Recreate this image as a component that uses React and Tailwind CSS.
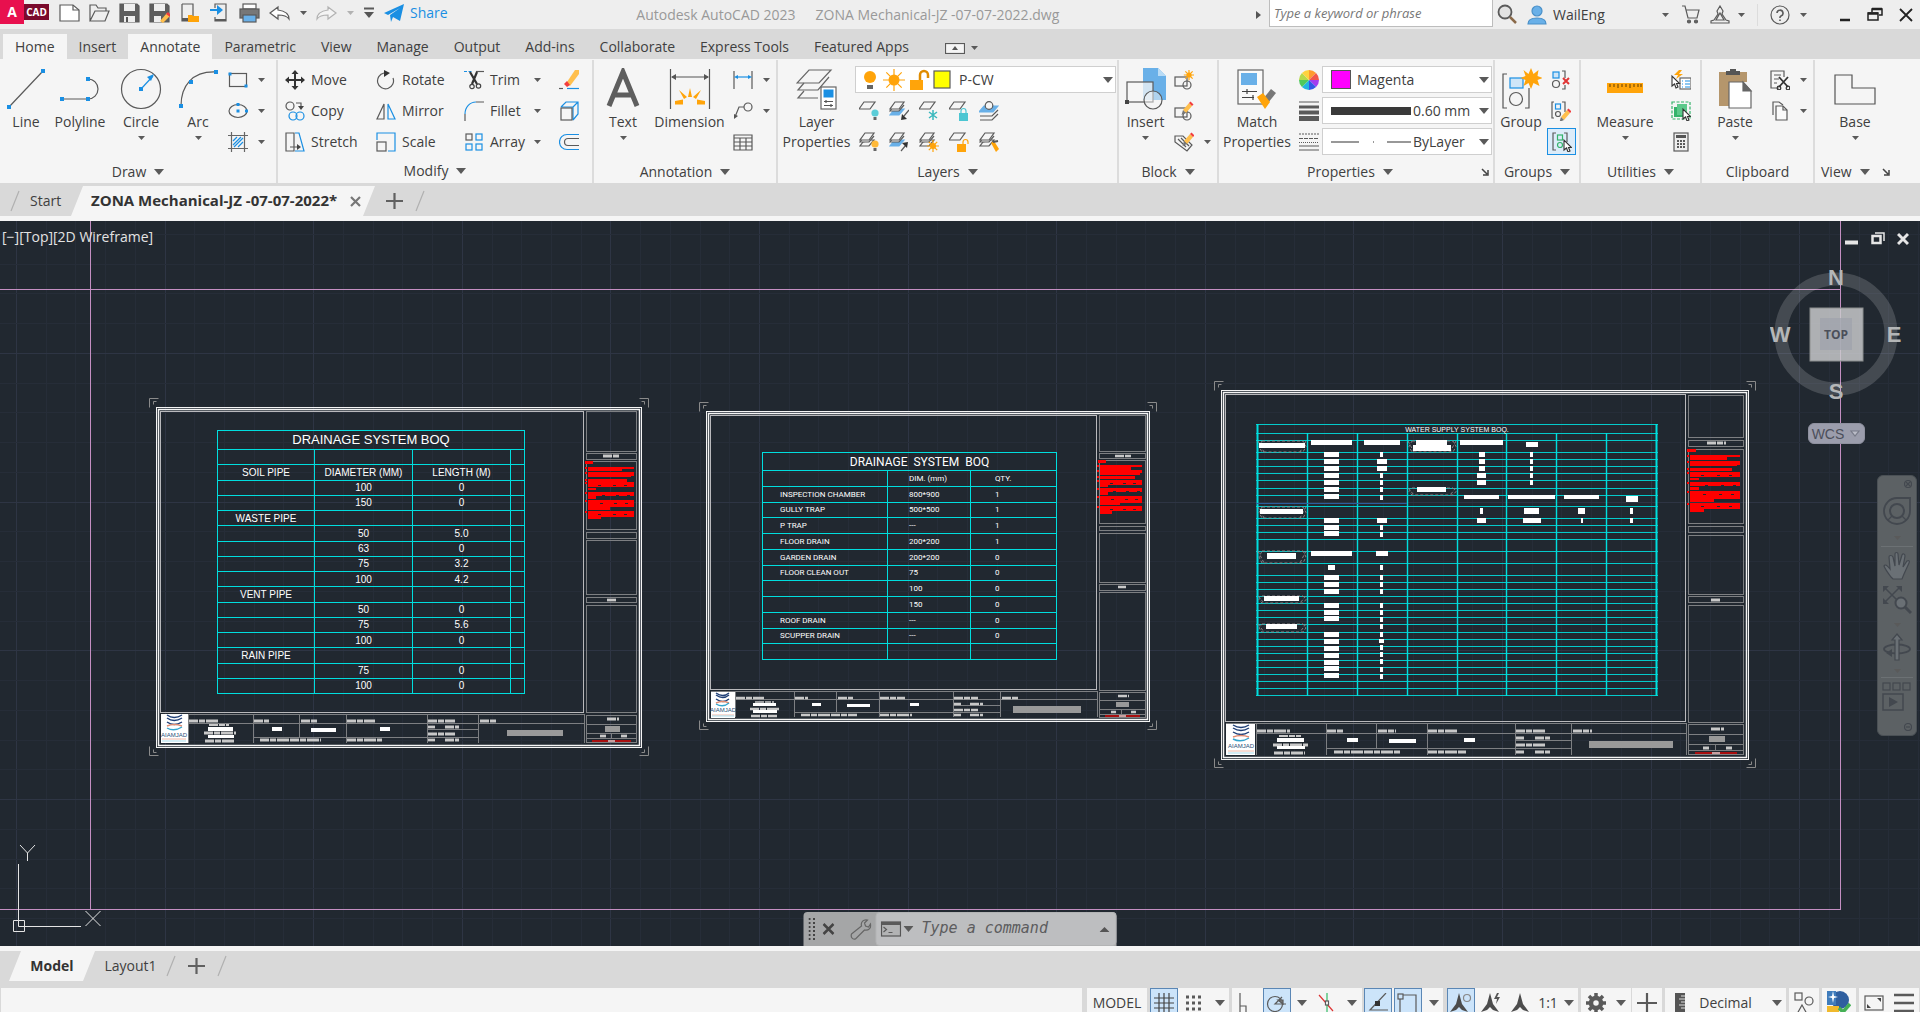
import React from "react";

const INK = "#5a5a5a";
const BLUE = "#1a8fe3";
const LIGHT = "#69b0e8";
const ORANGE = "#ffa40a";

function Ico({ w = 20, h = 20, children, className = "" }) {
  return (
    <svg width={w} height={h} viewBox={`0 0 ${w} ${h}`} fill="none" stroke={INK} strokeWidth="1.2" className={`shrink-0 ${className}`} aria-hidden="true">
      {children}
    </svg>
  );
}

function Caret({ big = false, className = "" }) {
  return big ? (
    <svg width="10" height="6" viewBox="0 0 10 6" className={`shrink-0 ${className}`} aria-hidden="true"><path d="M0 0h10L5 6z" fill="#5a5a5a" /></svg>
  ) : (
    <svg width="7" height="4" viewBox="0 0 7 4" className={`shrink-0 ${className}`} aria-hidden="true"><path d="M0 0h7L3.5 4z" fill="#5a5a5a" /></svg>
  );
}

const dots = (pts, s = 4) => pts.map(([x, y], i) => <rect key={i} x={x - s / 2} y={y - s / 2} width={s} height={s} fill={BLUE} stroke="none" />);

/* ---------- icons: layers ---------- */
const sheetPath = (x, y, w = 14, h = 7) => `M${x + 5} ${y}h${w - 5}l-5 ${h}h-${w - 5}z`;
const Stack = ({ top = 0, fill }) => (
  <g>
    <path d={`M4 ${top + 10}l-3 4h9l5-6h-3z`} fill={fill || "none"} stroke={fill || INK} />
    <path d={`M4 ${top + 6}l-3 4h9l5-6`} fill="#f5f5f5" />
    <path d={sheetPath(1, top + 1)} fill="#f5f5f5" />
  </g>
);
const Bulb = ({ x, y, c }) => (
  <g stroke="none"><circle cx={x} cy={y} r="3.6" fill={c} /><rect x={x - 1.5} y={y + 4} width="3" height="3" fill="#666" /></g>
);
const Sun = ({ x, y, r = 3.4 }) => (
  <g stroke={ORANGE} strokeWidth="1.6">
    <circle cx={x} cy={y} r={r} fill={ORANGE} stroke="none" />
    <path d={`M${x} ${y - r * 2}v${r * 4}M${x - r * 2} ${y}h${r * 4}M${x - r * 1.4} ${y - r * 1.4}l${r * 2.8} ${r * 2.8}M${x + r * 1.4} ${y - r * 1.4}l-${r * 2.8} ${r * 2.8}`} strokeWidth="1.2" />
  </g>
);
const Pencil = ({ x, y }) => (
  <g stroke="none"><path d={`M${x + 3} ${y + 6}l6-7 3 3-6 7z`} fill="#ffbf4d" /><path d={`M${x + 9} ${y - 1}l1.5-1.5 3 3-1.5 1.5z`} fill="#f23d3d" /><path d={`M${x + 3} ${y + 6}l3 3-4.500 2z`} fill="#777" /></g>
);
const Cursor = ({ x, y }) => <path d={`M${x} ${y}v10l2.500-2 1.500 4 2-1-1.500-3.500h3z`} fill="#fff" stroke="#333" strokeWidth="1.1" />;

const I = {
  line: <Ico w={41} h={42}><path d="M3 39L37 3" />{dots([[3, 39], [37, 3]])}</Ico>,
  polyline: <Ico w={41} h={42}><path d="M2 31h26a10 10 0 0 0 0-20" />{dots([[2, 31], [28, 31], [28, 11]])}</Ico>,
  circle: <Ico w={42} h={42}><circle cx="21" cy="21" r="19.500" /><path d="M21 21L33 8" stroke={BLUE} /><path d="M34 6l-7 3 4 4z" fill={BLUE} stroke="none" />{dots([[21, 21]])}</Ico>,
  arc: <Ico w={41} h={42}><path d="M3 38C3 18 14 3 38 4" />{dots([[3, 38], [13, 14], [38, 4]])}</Ico>,
  rect: <Ico><rect x="1.500" y="3.500" width="17" height="13" />{dots([[2, 4], [18, 16]], 3)}</Ico>,
  ellipse: <Ico><ellipse cx="10" cy="10" rx="9" ry="6.500" />{dots([[10, 10], [10, 3.5], [18.5, 10]], 3)}</Ico>,
  hatch: <Ico><path d="M3.500 0v20M16.500 0v20M0 3.500h20M0 16.500h20" stroke="#666" /><path d="M5 9l4-4M5 13l8-8M6 15l9-9M10 15l5-5" stroke={BLUE} /></Ico>,
  move: <Ico><path d="M10 3v14M3 10h14" stroke="#333" strokeWidth="2" /><path d="M10 0l3.500 4h-7zM10 20l3.500-4h-7zM0 10l4-3.500v7zM20 10l-4-3.500v7z" fill="#333" stroke="none" /></Ico>,
  copy: <Ico><circle cx="5" cy="5" r="4" /><path d="M11 2h5v4" /><path d="M13 5h6l-3 4z" fill="#444" stroke="none" /><circle cx="8" cy="15" r="4" stroke={BLUE} /><circle cx="15" cy="15" r="4" stroke={BLUE} /></Ico>,
  stretch: <Ico><path d="M1 1h8v18H1zM5 15h8" /><path d="M16 15l-4-3v6z" fill="#444" stroke="none" /><path d="M10 1h4l5 18h-9" stroke={BLUE} /></Ico>,
  rotate: <Ico><path d="M8 3a8 8 0 1 0 9 5" /><path d="M8 0l6 3-6 4z" fill="#333" stroke="none" /></Ico>,
  mirror: <Ico><path d="M8 3v15H1z" /><path d="M12 3v15h7z" stroke={BLUE} /></Ico>,
  scale: <Ico><path d="M1 8V1h18v18h-7" stroke={BLUE} /><rect x="1" y="10" width="9" height="9" /></Ico>,
  trim: <Ico><path d="M0 1.500h8" stroke={BLUE} strokeDasharray="3 1.500" /><path d="M12 1.500h8" /><path d="M6 2l7 12M13 2l-5 12" stroke="#333" strokeWidth="2.200" /><circle cx="8" cy="16.500" r="2.200" stroke="#444" /><circle cx="14.500" cy="16" r="2.200" stroke="#444" /></Ico>,
  fillet: <Ico><path d="M1 20v-7M12 1h8" /><path d="M1 13C1 6 6 1 12 1" stroke={BLUE} /></Ico>,
  array: <Ico><rect x="2" y="2" width="6" height="6" /><g stroke={BLUE}><rect x="12" y="2" width="6" height="6" /><rect x="2" y="12" width="6" height="6" /><rect x="12" y="12" width="6" height="6" /></g></Ico>,
  erase: <Ico><path d="M8 12L16 0h4v4l-9 12z" fill="#ffbf4d" stroke="none" /><path d="M5 14l3-3 3 4-3 2z" fill="#f23d3d" stroke="none" /><path d="M0 18.500h4" /><path d="M8 18.500h12" stroke={BLUE} /></Ico>,
  explode: <Ico><path d="M2 6l5-5h12v12l-5 6M14 6l5-5M2 6h12v13" stroke={BLUE} /><rect x="2" y="7" width="11" height="12" /></Ico>,
  offset: <Ico><path d="M20 2.500H8a7.500 7.500 0 0 0 0 15h12" stroke={BLUE} /><path d="M20 6.500H9a3.500 3.500 0 0 0 0 7h11" /></Ico>,
  text: <Ico w={36} h={42}><path d="M4 38L18 4l14 34M9 27h18" stroke="#5e5e5e" strokeWidth="5" /></Ico>,
  dimension: <Ico w={42} h={42}><path d="M1.500 1v40M40.500 1v40M3 9h36" stroke="#555" /><path d="M2 9l5-3v6zM40 9l-5-3v6z" fill="#555" stroke="none" /><path d="M6 33l8-1.500v5H6zM36 33l-8-1.500v5h8zM10 22l8 7-3 2zM32 22l-8 7 3 2zM21 20l2 9h-4z" fill={ORANGE} stroke="none" /></Ico>,
  linear: <Ico><path d="M1 1v18M19 1v18" /><path d="M3 7h14" stroke={BLUE} /><path d="M1 7l4-2v4zM19 7l-4-2v4z" fill={BLUE} stroke="none" /></Ico>,
  leader: <Ico><circle cx="15" cy="6" r="4" /><path d="M11 6H6L2 16" /><path d="M1 18l0-5 4 2z" fill="#555" stroke="none" /></Ico>,
  table: <Ico><path d="M1 3h18v15H1zM1 6h18M1 10h18M1 14h18M7 6v12M13 6v12" /></Ico>,
  layers: <Ico w={42} h={42}><g stroke="#666"><path d="M13 2h22L23 15H1z" /><path d="M8 15l-6 7h20l11-13" /><path d="M8 23l-6 7h20" /></g><rect x="25" y="19" width="15" height="22" fill="#fff" stroke="#666" /><rect x="27.500" y="21.500" width="10" height="8" fill={BLUE} stroke="none" /><path d="M28 33.500h9M28 37.500h9M30 32v3M35 36v3" stroke="#555" /></Ico>,
  l1: <Ico><path d={sheetPath(0, 1, 16, 7)} /><Bulb x={16} y={12} c="#5ccdd8" /></Ico>,
  l2: <Ico><Stack fill={LIGHT} /><path d="M20 9l-5 6" /><path d="M12 19l1-6 5 5z" fill="#333" stroke="none" /></Ico>,
  l3: <Ico><path d={sheetPath(0, 1, 16, 7)} /><path d="M14 9v10M10 11l8 6M18 11l-8 6" stroke="#39b8bd" strokeWidth="1.500" /></Ico>,
  l4: <Ico><path d={sheetPath(0, 1, 16, 7)} /><rect x="10" y="12" width="9" height="8" fill="#4cc6d2" stroke="none" /><path d="M12 12v-2a2.500 2.500 0 0 1 5 0v2" stroke="#4cc6d2" /></Ico>,
  l5: <Ico><path d={sheetPath(0, 5, 19, 6)} fill={LIGHT} stroke={LIGHT} /><circle cx="10" cy="4.500" r="3.800" fill="#f5f5f5" /><path d="M1 15h12l6-6M1 19h12l6-6" /></Ico>,
  m1: <Ico><Stack /><Bulb x={16} y={12} c="#ffb938" /></Ico>,
  m2: <Ico><Stack fill={LIGHT} /><path d="M12 19l5-6" /><path d="M19 10l-1 6-5-5z" fill="#333" stroke="none" /></Ico>,
  m3: <Ico><Stack /><Sun x={14} y={14} r={3} /></Ico>,
  m4: <Ico><path d={sheetPath(0, 1, 16, 7)} /><rect x="8" y="12" width="9" height="8" fill={ORANGE} stroke="none" /><path d="M14 12v-2a2.500 2.500 0 0 1 5 0v2" stroke={ORANGE} /></Ico>,
  m5: <Ico><Stack /><path d="M12 11l3-2 5 8-3 3z" fill={ORANGE} stroke="none" /><path d="M14 10l5-1" strokeWidth="2" /></Ico>,
  insert: <Ico w={42} h={42}><path d="M18 0h15l8 8v24H18z" fill={LIGHT} stroke="none" /><path d="M33 0v8h8z" fill="#b9dcf6" stroke="none" /><rect x="2" y="14" width="26" height="20" fill="#f5f5f5" fillOpacity="0.75" /><circle cx="28" cy="32" r="9" fill="#f5f5f5" fillOpacity="0.5" /><rect x="0" y="32" width="4" height="4" fill="#444" stroke="none" /></Ico>,
  b1: <Ico><rect x="1" y="7" width="12" height="9" /><circle cx="13" cy="15" r="4" /><Sun x={15} y={5} r={2.6} /></Ico>,
  b2: <Ico><rect x="1" y="7" width="12" height="9" /><circle cx="13" cy="15" r="4" /><Pencil x={6} y={3} /></Ico>,
  b3: <Ico><path d="M1 4h8l9 9-5 6L1 10z" /><path d="M4 7l8 8M7 6l8 8" /><Pencil x={7} y={3} /></Ico>,
  match: <Ico w={42} h={42}><rect x="2" y="2" width="25" height="34" fill="#fafafa" stroke="#666" /><rect x="5" y="5" width="16" height="12" fill={LIGHT} stroke="none" /><path d="M6 23.500h15M6 29.500h12M11 21v5M17 27v5" stroke="#444" /><path d="M27 31l8-10 5 4-8 10z" fill="#777" stroke="none" /><path d="M21 29l6-4 7 9-5 7z" fill={ORANGE} stroke="none" /></Ico>,
  wheel: (
    <Ico>{["#ff9a2e", "#f2554b", "#a23cf0", "#3257e6", "#21b5e0", "#4fc95b", "#b7d94a", "#ffd23e"].map((c, i) => {
      const a = (i * Math.PI) / 4 - Math.PI / 2, b = a + Math.PI / 4;
      return <path key={c} d={`M10 10L${10 + 10 * Math.cos(a)} ${10 + 10 * Math.sin(a)}A10 10 0 0 1 ${10 + 10 * Math.cos(b)} ${10 + 10 * Math.sin(b)}z`} fill={c} stroke="none" />;
    })}</Ico>
  ),
  weights: <Ico><path d="M0 1h20" strokeWidth="1" /><path d="M0 6h20" strokeWidth="3" /><path d="M0 11.500h20" strokeWidth="4" /><path d="M0 17.500h20" strokeWidth="5" /></Ico>,
  types: <Ico><path d="M0 2h20" strokeDasharray="2 1" /><path d="M0 6.500h20" strokeDasharray="4 1" /><path d="M0 10.500h20" strokeDasharray="1 1" /><path d="M0 14h20M0 18h20" /></Ico>,
  group: <Ico w={42} h={42}><path d="M7 6H3v34h4M25 40h4V20" stroke="#555" /><rect x="10" y="10" width="13" height="10" fill="#cfe6f8" stroke={BLUE} /><circle cx="16" cy="31" r="6.500" /><path d="M31 0l2.500 6 5-4-1 6 5 2-5 2 2 6-6-3-2.500 6-2.500-6-5 3 2-6-5-2 5-2-2-6 5 4z" fill={ORANGE} stroke="none" /></Ico>,
  g1: <Ico><rect x="2" y="2" width="6" height="6" fill="#cfe6f8" stroke={BLUE} /><circle cx="5" cy="14" r="3.500" /><path d="M11 1h3v7M11 19h3v-4" /><path d="M12 8l6 6M18 8l-6 6" stroke="#e03535" strokeWidth="2" /></Ico>,
  g2: <Ico><path d="M3 1H1v16h2M11 1h3v10" /><rect x="4.500" y="3" width="5" height="5" stroke={BLUE} /><circle cx="7" cy="13" r="2.500" /><Pencil x={7} y={10} /></Ico>,
  g3: <Ico><path d="M4 1H1v17h3M12 1h3v9" /><rect x="5.500" y="3" width="5" height="5" stroke="#35b36b" /><circle cx="8" cy="13" r="2.500" stroke="#35b36b" /><Cursor x={12} y={8} /></Ico>,
  ruler: <Ico w={36} h={42}><rect x="0" y="15" width="36" height="10" fill={ORANGE} stroke="none" /><path d="M3 16v3M7 16v3M11 16v4M15 16v3M19 16v3M23 16v4M27 16v3M31 16v3M34 16v3" stroke="#7a4f06" /></Ico>,
  u1: <Ico><rect x="9" y="8" width="11" height="11" fill="#fff" stroke="#666" /><path d="M14 11h5M14 14h5M14 17h5M11 11h1M11 14h1M11 17h1" stroke={BLUE} /><path d="M8 0L3 5h4L5 9l7-5H8l3-4z" fill={ORANGE} stroke="none" /><Cursor x={1} y={6} /></Ico>,
  u2: <Ico><rect x="1" y="1" width="18" height="17" stroke="#35b36b" strokeDasharray="3 1.500" /><rect x="3" y="6" width="9" height="10" fill="#35b36b" stroke="none" /><rect x="6" y="3" width="10" height="11" fill="#5cc98b" stroke="none" /><Cursor x={12} y={8} /></Ico>,
  u3: <Ico><rect x="3" y="1" width="14" height="18" fill="#eee" /><rect x="5" y="3" width="10" height="3" fill="#555" stroke="none" /><path d="M6 9h8M6 12h8M6 15h8" strokeWidth="2" strokeDasharray="2 1" /></Ico>,
  paste: <Ico w={36} h={42}><path d="M2 4h28v10H13v24H2z" fill="#b5966c" stroke="none" /><path d="M9 7V3h4V1h6v2h4v4z" fill="#555" stroke="none" /><path d="M12 14h14l8 9v17H12z" fill="#fff" stroke="#666" /><path d="M26 14v9h8z" fill="#666" stroke="#666" /></Ico>,
  cut: <Ico><path d="M9 18H1V1h13v6M4 5h7M4 9h5M4 13h3" /><path d="M9 7l9 10M18 7l-9 10" stroke="#333" strokeWidth="1.800" /><circle cx="9" cy="18" r="1.800" stroke="#333" /><circle cx="18" cy="18" r="1.800" stroke="#333" /></Ico>,
  clip: <Ico><path d="M3 14V1h6l4 3" /><path d="M6 5h7l4 4v10H6z" fill="#fafafa" /><path d="M13 5v4h4" /></Ico>,
  base: <Ico w={42} h={42}><path d="M1 7h17v13h23v16H1z" stroke="#555" /></Ico>,
};

function Big({ icon, label, label2, w, caret }) {
  return (
    <button type="button" className={`${w} flex h-[100px] shrink-0 flex-col items-center whitespace-nowrap pt-2`}>
      <span className="flex h-[42px] items-center">{icon}</span>
      <span className="mt-0.5 leading-5">{label}</span>
      {label2 && <span className="leading-5">{label2}</span>}
      {caret && <Caret className="mt-1" />}
    </button>
  );
}

function Small({ icon, label, caret, name, w = "", active }) {
  return (
    <button type="button" aria-label={name || label} className={`${w} flex h-[31px] items-center whitespace-nowrap`}>
      {active ? <span className="-ml-1 flex h-[27px] w-[29px] items-center justify-center border border-[#1a8fe3] bg-[#dcecf9]">{icon}</span> : icon}
      {label && <span className="ml-1.5">{label}</span>}
      {caret && <Caret className={label ? "ml-auto" : "ml-2.5"} />}
    </button>
  );
}

function Panel({ w, title, caret = true, launcher, children }) {
  return (
    <section className={`${w} flex flex-col border-r-2 border-[#dcdcdc]`}>
      <div className="flex h-[100px]">{children}</div>
      <div className="flex h-6 items-center">
        <button type="button" className="mx-auto flex items-center gap-2 whitespace-nowrap leading-5">{title}{caret && <Caret big />}</button>
        {launcher && (
          <button type="button" aria-label={`${title} settings`} className="mr-1 shrink-0">
            <Ico w={8} h={8}><path d="M1 1l5 5M7 2v5H2" stroke="#444" strokeWidth="1.500" /></Ico>
          </button>
        )}
      </div>
    </section>
  );
}

function Combo({ label, value, children, w }) {
  return (
    <div className={`${w} flex h-[27px] items-center border border-[#cfcfcf] bg-white pr-0.5`}>
      {children}
      <select aria-label={label} className="h-6 min-w-0 flex-1 appearance-none bg-transparent outline-none" defaultValue={value}>
        <option>{value}</option>
      </select>
      <Caret big />
    </div>
  );
}

function TitleBar() {
  const tb = "flex shrink-0 items-center justify-center";
  return (
    <header className="flex h-[29px] items-center bg-[#eeeeee]">
      <button type="button" aria-label="Application menu" className="flex h-6 shrink-0 items-center self-start">
        <span className="flex h-6 w-6 items-center justify-center bg-[#e8104e] text-sm font-bold text-white">A</span>
        <span className="flex h-4 w-[25px] items-center justify-center bg-[#7a0a2c] text-[10px] font-bold text-white">CAD</span>
      </button>
      <div className="ml-2.5 flex items-center gap-[9px] pb-1">
        <button type="button" aria-label="New" className={tb}><Ico w={21} h={20}><path d="M1 2h13l6 5v11H1z" fill="#fff" /><path d="M14 2v5h6" /></Ico></button>
        <button type="button" aria-label="Open" className={tb}><Ico w={21} h={20}><path d="M1 18V2h6l2 3h8v3M1 18L6 8h14l-4 10z" /></Ico></button>
        <button type="button" aria-label="Save" className={tb}><Ico w={21} h={20}><path d="M1 1h17l2 2v16H1z" fill="#5e5e5e" /><rect x="5" y="1" width="11" height="7" fill="#eee" stroke="none" /><rect x="5" y="13" width="11" height="6" fill="#eee" stroke="none" /><rect x="7" y="14" width="2" height="5" fill="#555" stroke="none" /></Ico></button>
        <button type="button" aria-label="Save As" className={tb}><Ico w={21} h={20}><path d="M1 1h17l2 2v16H1z" fill="#5e5e5e" /><rect x="5" y="1" width="11" height="7" fill="#eee" stroke="none" /><rect x="5" y="13" width="7" height="6" fill="#eee" stroke="none" /><path d="M11 18l7-8 3 3-7 7z" fill="#ffbf4d" stroke="none" /><path d="M17 11l2-2 2 2v3z" fill="#f23d3d" stroke="none" /></Ico></button>
        <button type="button" aria-label="Open from Web and Mobile" className={tb}><Ico w={21} h={20}><path d="M3 1h11v13M3 1v17h7" fill="none" /><path d="M3 16.500h7" strokeWidth="3" /><path d="M9 12h4l1 1h6v6H9z" fill={ORANGE} stroke="none" /></Ico></button>
        <button type="button" aria-label="Save to Web and Mobile" className={tb}><Ico w={21} h={20}><path d="M6 5V1h11v17H6v-4" /><path d="M6 17h11" strokeWidth="2" /><path d="M1 7h8" stroke={BLUE} strokeWidth="2" /><path d="M8 2l6 5-6 5z" fill={BLUE} stroke="none" /></Ico></button>
        <button type="button" aria-label="Plot" className={tb}><Ico w={21} h={20}><rect x="4" y="1" width="13" height="5" fill="#fff" /><rect x="1" y="6" width="19" height="9" fill="#777" /><rect x="4" y="12" width="13" height="7" fill={LIGHT} /></Ico></button>
        <button type="button" aria-label="Undo" className={`${tb} gap-2.5`}><Ico w={21} h={20}><path d="M9 4L1 10l8 6v-4c5 0 9 1 11 4 0-5-4-8-11-9z" fill="#fff" /></Ico><Caret /></button>
        <button type="button" aria-label="Redo" className={`${tb} gap-2.5 opacity-40`}><Ico w={21} h={20}><path d="M12 4l8 6-8 6v-4c-5 0-9 1-11 4 0-5 4-8 11-9z" fill="#fff" /></Ico><Caret /></button>
        <button type="button" aria-label="Customize toolbar" className={tb}><Ico w={12} h={12}><path d="M1 1.500h10" strokeWidth="2" /><path d="M1 5h10l-5 6z" fill="#555" stroke="none" /></Ico></button>
        <button type="button" className="flex shrink-0 items-center gap-1.5 text-[#1a8fe3]"><Ico w={20} h={18}><path d="M0 9L20 0l-4 17-7-4-2 5-1-7L16 4 4 11z" fill={BLUE} stroke="none" /></Ico>Share</button>
      </div>
      <div className="flex min-w-0 flex-1 justify-center gap-5 whitespace-pre pr-2 text-[#999]"><span>Autodesk AutoCAD 2023</span><span>ZONA Mechanical-JZ -07-07-2022.dwg</span></div>
      <svg width="5" height="8" viewBox="0 0 5 8" className="mr-2 shrink-0" aria-hidden="true"><path d="M0 0l5 4-5 4z" fill="#555" /></svg>
      <input aria-label="Search" placeholder="Type a keyword or phrase" className="h-[27px] w-56 shrink-0 self-start border border-t-0 border-[#bdbdbd] bg-white px-1 text-[13px] italic outline-none placeholder:text-[#777]" />
      <button type="button" aria-label="Search" className={`${tb} ml-1`}><Ico w={22} h={22}><circle cx="8" cy="8" r="6.500" strokeWidth="1.800" fill="#e2e2e2" /><path d="M13 13l6 6" stroke="#8a6a4a" strokeWidth="2.500" /></Ico></button>
      <button type="button" className="ml-2 flex w-[142px] shrink-0 items-center gap-1.5"><Ico w={20} h={20}><circle cx="10" cy="6" r="5" fill={LIGHT} stroke="#4a90c8" /><path d="M1 19c0-5 4-6 9-6s9 1 9 6z" fill={LIGHT} stroke="#4a90c8" /></Ico>WailEng<Caret className="ml-auto" /></button>
      <button type="button" aria-label="Store" className={`${tb} ml-3`}><Ico w={19} h={19}><path d="M1 1h3l3 12h9l2-8H5" /><circle cx="8" cy="16.500" r="1.500" fill="#666" /><circle cx="15" cy="16.500" r="1.500" fill="#666" /></Ico></button>
      <button type="button" aria-label="Autodesk apps" className={`${tb} ml-2.5 gap-2`}><Ico w={20} h={20}><path d="M10 1l3 5-1 3 4 6 3 1v2H1v-2l3-1 4-6-1-3zM10 8l4 7H6z" /></Ico><Caret /></button>
      <span className="ml-3 h-[22px] w-px bg-[#dcdcdc]" />
      <button type="button" aria-label="Help" className={`${tb} ml-3 gap-2.5`}><Ico w={20} h={20}><circle cx="10" cy="10" r="9" /><path d="M7 8a3 3 0 1 1 4 3l-1 1v1M10 14.500v1.500" strokeWidth="1.600" /></Ico><Caret /></button>
      <button type="button" aria-label="Minimize" className={`${tb} ml-8`}><Ico w={12} h={14}><path d="M1 12h10" stroke="#222" strokeWidth="2.500" /></Ico></button>
      <button type="button" aria-label="Restore" className={`${tb} ml-4`}><Ico w={16} h={15}><path d="M5 5V2h10v6h-3" stroke="#222" strokeWidth="1.500" /><rect x="1" y="6" width="10" height="7" stroke="#222" strokeWidth="1.500" /><path d="M1 6.500h10M5 2h10" stroke="#222" strokeWidth="2.500" /></Ico></button>
      <button type="button" aria-label="Close" className={`${tb} ml-4 mr-[7px]`}><Ico w={14} h={14}><path d="M1 1l12 12M13 1L1 13" stroke="#222" strokeWidth="1.800" /></Ico></button>
    </header>
  );
}

const TABS = ["Home", "Insert", "Annotate", "Parametric", "View", "Manage", "Output", "Add-ins", "Collaborate", "Express Tools", "Featured Apps"];

function RibbonTabs() {
  return (
    <nav className="flex h-[30px] items-end bg-[#d9d9d9] pl-[3px]">
      {TABS.map((t, i) => (
        <button key={t} type="button" className={`h-[25px] whitespace-nowrap px-3 ${i > 3 ? "ml-px" : ""} ${t === "Home" || t === "Annotate" ? "bg-[#f5f5f5]" : ""}`}>{t}</button>
      ))}
      <button type="button" aria-label="Ribbon display" className="ml-6 flex h-[22px] items-center gap-1.5">
        <Ico w={20} h={11}><rect x="0.500" y="0.500" width="19" height="10" fill="#f5f5f5" /><path d="M10 3l3 4H7z" fill="#555" stroke="none" /></Ico><Caret />
      </button>
    </nav>
  );
}

function Ribbon() {
  const col = "flex flex-col pt-1";
  return (
    <div className="flex h-[124px] shrink-0 bg-[#f5f5f5] pt-px">
      <Panel w="w-[278px] shrink-0" title="Draw">
        <Big icon={I.line} label="Line" w="w-[52px]" />
        <Big icon={I.polyline} label="Polyline" w="w-[56px]" />
        <Big icon={I.circle} label="Circle" w="w-[66px]" caret />
        <Big icon={I.arc} label="Arc" w="w-[48px]" caret />
        <div className={`${col} ml-1.5`}><Small icon={I.rect} name="Rectangle" caret /><Small icon={I.ellipse} name="Ellipse" caret /><Small icon={I.hatch} name="Hatch" caret /></div>
      </Panel>
      <Panel w="w-[316px] shrink-0" title="Modify">
        <div className={`${col} w-[91px] ml-[7px]`}><Small icon={I.move} label="Move" /><Small icon={I.copy} label="Copy" /><Small icon={I.stretch} label="Stretch" /></div>
        <div className={`${col} w-[88px]`}><Small icon={I.rotate} label="Rotate" /><Small icon={I.mirror} label="Mirror" /><Small icon={I.scale} label="Scale" /></div>
        <div className={`${col} w-[77px]`}><Small icon={I.trim} label="Trim" caret /><Small icon={I.fillet} label="Fillet" caret /><Small icon={I.array} label="Array" caret /></div>
        <div className={`${col} ml-[18px]`}><Small icon={I.erase} name="Erase" /><Small icon={I.explode} name="Explode" /><Small icon={I.offset} name="Offset" /></div>
      </Panel>
      <Panel w="w-[184px] shrink-0" title="Annotation">
        <Big icon={I.text} label="Text" w="w-[58px]" caret />
        <Big icon={I.dimension} label="Dimension" w="w-[75px]" />
        <div className={`${col} ml-1.5`}><Small icon={I.linear} name="Linear" caret /><Small icon={I.leader} name="Leader" caret /><Small icon={I.table} name="Table" /></div>
      </Panel>
      <Panel w="w-[341px] shrink-0" title="Layers">
        <Big icon={I.layers} label="Layer" label2="Properties" w="w-[77px]" />
        <div className={`${col} flex-1 pr-px`}>
          <div className="flex h-[31px] items-center">
            <Combo label="Layer" value="P-CW" w="w-full">
              <Ico w={87} h={22} className="mx-2">
                <circle cx="6" cy="8" r="6" fill={ORANGE} stroke="none" /><rect x="3" y="16" width="6" height="4" fill="#666" stroke="none" />
                <Sun x={30} y={11} r={5.500} />
                <rect x="46" y="11" width="13" height="10" fill={ORANGE} stroke="none" /><path d="M56 11V6a4 4 0 0 1 8 0v3" stroke="#e08c00" strokeWidth="2.500" />
                <rect x="70" y="2" width="16" height="17" fill="#ffff00" />
              </Ico>
            </Combo>
          </div>
          <div className="flex h-[31px] items-center gap-2.5 pl-1">{["l1", "l2", "l3", "l4", "l5"].map((k) => <button key={k} type="button" aria-label={`Layer tool ${k}`}>{I[k]}</button>)}</div>
          <div className="flex h-[31px] items-center gap-2.5 pl-1">{["m1", "m2", "m3", "m4", "m5"].map((k) => <button key={k} type="button" aria-label={`Layer tool ${k}`}>{I[k]}</button>)}</div>
        </div>
      </Panel>
      <Panel w="w-[100px] shrink-0" title="Block">
        <Big icon={I.insert} label="Insert" w="w-[53px]" caret />
        <div className={`${col} ml-0.5`}><Small icon={I.b1} name="Create" /><Small icon={I.b2} name="Edit" /><Small icon={I.b3} name="Edit Attributes" caret /></div>
      </Panel>
      <Panel w="w-[276px] shrink-0" title="Properties" launcher>
        <Big icon={I.match} label="Match" label2="Properties" w="w-[76px]" />
        <div className={`${col} w-[27px] items-center`}>{["wheel", "weights", "types"].map((k) => <span key={k} className="flex h-[31px] items-center">{I[k]}</span>)}</div>
        <div className={`${col} flex-1 pr-px`}>
          <div className="flex h-[31px] items-center"><Combo label="Object color" value="Magenta" w="w-full"><span className="mx-1.5 ml-2 h-[19px] w-5 shrink-0 border border-[#555] bg-[#ff00ff]" /></Combo></div>
          <div className="flex h-[31px] items-center"><Combo label="Lineweight" value="0.60 mm" w="w-full"><span className="ml-2 mr-0.5 h-2 w-20 shrink-0 bg-[#3a3a3a]" /></Combo></div>
          <div className="flex h-[31px] items-center"><Combo label="Linetype" value="ByLayer" w="w-full"><Ico w={80} h={4} className="ml-2 mr-0.5"><path d="M0 2h28M42 2h1M56 2h24" stroke="#333" /></Ico></Combo></div>
        </div>
      </Panel>
      <Panel w="w-[86px] shrink-0" title="Groups">
        <Big icon={I.group} label="Group" w="w-[52px]" />
        <div className={`${col} ml-1`}><Small icon={I.g1} name="Ungroup" /><Small icon={I.g2} name="Group Edit" /><Small icon={I.g3} name="Group Selection" active /></div>
      </Panel>
      <Panel w="w-[121px] shrink-0" title="Utilities">
        <Big icon={I.ruler} label="Measure" w="w-[88px]" caret />
        <div className={`${col} ml-0.5`}><Small icon={I.u1} name="Quick Select" /><Small icon={I.u2} name="Select All" /><Small icon={I.u3} name="Calculator" /></div>
      </Panel>
      <Panel w="w-[113px] shrink-0" title="Clipboard" caret={false}>
        <Big icon={I.paste} label="Paste" w="w-[66px]" caret />
        <div className={`${col} ml-0.5`}><Small icon={I.cut} name="Cut" caret /><Small icon={I.clip} name="Copy Clip" caret /></div>
      </Panel>
      <section className="flex flex-1 flex-col">
        <Big icon={I.base} label="Base" w="w-20" caret />
        <div className="flex h-6 items-center gap-2 pl-1.5"><button type="button" className="flex items-center gap-2 leading-5">View<Caret big /></button><Ico w={8} h={8} className="ml-1"><path d="M1 1l5 5M7 2v5H2" stroke="#444" strokeWidth="1.500" /></Ico></div>
      </section>
    </div>
  );
}

const Slash = () => <Ico w={10} h={22}><path d="M9 1L1 21" stroke="#b0b0b0" /></Ico>;
const Plus = () => <Ico w={17} h={16}><path d="M8.500 0v16M0 8h17" stroke="#606060" strokeWidth="2.200" /></Ico>;

function FileTabs() {
  return (
    <div className="flex h-[38px] shrink-0 items-end border-b-[5px] border-[#f5f5f5] bg-[#d9d9d9]">
      <div className="flex h-[30px] items-center pl-2.5"><Slash /><button type="button" className="w-[51px] pl-2.5 text-left">Start</button></div>
      <div className="flex h-[30px] w-[304px] items-center bg-[#f5f5f5] pl-5 pr-[14px] [clip-path:polygon(12px_0,100%_0,calc(100%-12px)_100%,0_100%)]">
        <button type="button" className="whitespace-nowrap text-[15px] font-bold text-[#333]">ZONA Mechanical-JZ -07-07-2022*</button>
        <button type="button" aria-label="Close drawing" className="ml-auto"><Ico w={11} h={11}><path d="M1 1l9 9M10 1l-9 9" strokeWidth="2.200" stroke="#777" /></Ico></button>
      </div>
      <div className="flex h-[30px] items-center gap-3 pl-[11px]"><button type="button" aria-label="New drawing"><Plus /></button><Slash /></div>
    </div>
  );
}

/* ---------- drawing sheets ---------- */
const NOTES = [
  [466, 58.7, 9, 3, 0], [469, 64.7, 50, 2, 1], [469, 66.7, 37, 3, 0], [469, 70.7, 50, 4, 1], [469, 74.2, 47, 2, 0], [469, 77.7, 42, 3, 1],
  [469, 81.7, 50, 5.4, 1], [469, 87.5, 9, 2, 0], [469, 92, 50, 4.2, 1], [469, 96.500, 9, 3, 0], [469, 100.7, 50, 8, 1], [469, 108.500, 24, 3, 0],
  [469, 112.7, 50, 6, 1], [469, 118.7, 14, 3, 0],
];

function Sheet({ x, y, w, h, bar, lead }) {
  const k = w / 528;
  const s = (n) => Math.round(n * k);
  const box = (a, b, c, d, key) => <rect key={key} x={s(a) + 0.5} y={s(b) + 0.5} width={s(c) - s(a)} height={s(d) - s(b)} />;
  const scrawl = (a, b, len, i, t = 3) => <path key={i} d={`M${s(a)} ${s(b)}h${s(len)}`} stroke="#c8c8c8" strokeWidth={t * k} strokeDasharray="9 1 6 1 12 1" />;
  const solid = (a, b, c, d, fill, i) => <rect key={i} x={s(a)} y={s(b)} width={s(c)} height={Math.max(1, s(d))} fill={fill} stroke="none" />;
  const corner = (cx, cy, dx, dy) => <path key={`${cx}-${cy}`} d={`M${cx} ${cy + dy * 9}V${cy}H${cx + dx * 9}M${cx + dx * 4} ${cy + dy * 6}v${-dy * 3}h${dx * 3}`} stroke="#8a8a8a" />;
  return (
    <svg className="absolute" style={{ left: x - 10, top: y - 10 }} width={w + 20} height={h + 20} fill="none" stroke="#7d7f82" aria-hidden="true">
      <g transform="translate(10 10)">
        {corner(-6.5, -8.5, 1, 1)}{corner(w + 6.5, -8.5, -1, 1)}{corner(-6.5, h + 7.5, 1, -1)}{corner(w + 6.5, h + 7.5, -1, -1)}
        <rect x="0.500" y="0.500" width={w - 1} height={h - 1} stroke="#f4f4f4" />
        <rect x="2.500" y="2.500" width={w - 5} height={h - 5} stroke="#f4f4f4" strokeWidth="1.500" />
        <rect x="4.500" y="4.500" width={s(465) - 5} height={s(332) - 5} stroke="#b9b9bc" />
        {[[4.7, 47.3], [50, 56.3], [58.7, 133], [136.3, 142], [144.7, 203.7], [206.3, 212.3], [215, 331.7], [334.3, 364]].map(([a, b]) => box(467, a, 522, b, a))}
        <path d={`M${s(467)} ${s(344) + 0.5}H${s(522)}M${s(467)} ${s(354) + 0.5}H${s(522)}M${s(467)} ${s(360) + 0.5}H${s(522)}M${s(494) + 0.5} ${s(354)}V${s(360)}`} />
        {scrawl(486, 53.4, 19, "a")}{scrawl(490, 209.500, 10, "b")}{scrawl(490, 339, 13, "c")}{scrawl(482, 357.500, 6, "d")}{scrawl(505, 357.500, 6, "e")}
        {solid(488, 346.3, 16, 6, "#999", "f")}{solid(474, 361.500, 42, 2, "#a80f0f", "g")}{solid(491, 361.500, 8, 2, "#c9a0a0", "h")}
        {NOTES.map(([a, b, c, d, bullet], i) => (
          <g key={i} fill="#ff0000" stroke="none">
            <rect x={s(a)} y={s(b)} width={s(c)} height={Math.max(1, Math.round(d * k))} />
            {bullet === 1 && <rect x={s(a) - 3} y={s(b)} width="2" height="2" />}
            {bullet === 1 && d > 4 && [11, 27, 39].map((g) => <rect key={g} x={s(a + g + (i % 3) * 2)} y={s(b) + (i % 2 ? 0 : 3)} width="3" height="1" fill="#212830" />)}
          </g>
        ))}
        <path d={`M5 ${s(333) + 0.5}H${s(465)}M${s(35)} ${s(343) + 0.5}H${s(465)}M${s(294)} ${s(350) + 0.5}H${s(350)}M${s(105)} ${s(358) + 0.5}H${s(350)}`} />
        {[35, 105, 155, 206, 294, 350, 465].map((c) => <path key={c} d={`M${s(c) + 0.5} ${s(333)}V${c === 155 ? s(358) : h - 5}`} />)}
        <rect x="5" y={s(334)} width={s(29)} height={s(31)} fill="#fff" stroke="none" />
        <g strokeWidth="1.400"><path d={`M${s(12)} ${s(335)}q${s(8)} 5 ${s(16)} 0M${s(12)} ${s(338)}q${s(8)} 5 ${s(16)} 0M${s(12)} ${s(342)}q${s(8)} 5 ${s(16)} 0`} stroke="#1f3f77" /><path d={`M${s(12)} ${s(347)}q${s(8)} -3 ${s(16)} 0`} stroke="#e08a70" /><path d={`M${s(12)} ${s(349)}q${s(8)} 4 ${s(16)} -1`} stroke="#35a5cf" /></g>
        <text x={s(20)} y={s(358)} textAnchor="middle" fill="#1f5077" stroke="none" className="font-['Liberation_Sans'] text-[6px]">AIAMJAD</text>
        <path d={`M${s(7)} ${s(361)}h${s(26)}`} stroke="#f0b9a8" /><path d={`M${s(7)} ${s(363)}h${s(26)}`} stroke="#a7dcec" />
        {[[36, 341, 33], [106, 341, 16], [157, 341, 18], [207, 341, 30], [295, 341, 29], [352, 341, 19], [113, 361.500, 66], [207, 361.500, 38], [295, 348, 8], [314, 348, 15], [295, 355, 29], [295, 361.500, 8], [314, 361.500, 15]].map(([a, b, c], i) => scrawl(a, b, c, i))}
        {scrawl(58, 346, 22, "n1", 2)}{solid(56, 347.500, 27, 4, "#fff", "n2")}{scrawl(52, 354.500, 35, "n3", 3)}{solid(56, 356, 28, 3, "#fff", "n4")}{scrawl(53, 363, 31, "n5", 3)}
        {solid(126, 347.500, 11, 4, "#fff", "p")}{solid(168, 348.500, 27, 4, "#fff", "q")}{solid(243, 347.500, 11, 4, "#fff", "r")}
        {solid(bar[0], 350.500, bar[1], lead, "#999", "t")}
      </g>
    </svg>
  );
}

const BOQ1 = [
  ["", "", ""], ["SOIL PIPE", "DIAMETER (MM)", "LENGTH (M)"], ["", "100", "0"], ["", "150", "0"], ["WASTE PIPE", "", ""], ["", "50", "5.0"], ["", "63", "0"], ["", "75", "3.2"],
  ["", "100", "4.2"], ["VENT PIPE", "", ""], ["", "50", "0"], ["", "75", "5.6"], ["", "100", "0"], ["RAIN PIPE", "", ""], ["", "75", "0"], ["", "100", "0"],
];

function DrainagePipes() {
  const c = "border border-[#00dede] p-0 font-normal";
  return (
    <table className="absolute left-[217px] top-[209px] h-[264px] w-[308px] table-fixed border-collapse text-center font-['Liberation_Sans'] text-[10px] leading-[13px] text-white">
      <colgroup><col className="w-[97px]" /><col className="w-[98px]" /><col className="w-[98px]" /><col /></colgroup>
      <thead><tr className="h-[19px]"><th colSpan={4} className={`${c} text-[13px] leading-4`}>DRAINAGE SYSTEM BOQ</th></tr></thead>
      <tbody>{BOQ1.map((r, i) => <tr key={i}>{r.map((v, j) => <td key={j} className={c}>{v || "\u00a0"}</td>)}<td className={c} /></tr>)}</tbody>
    </table>
  );
}

const BOQ2 = [
  ["", "DIM. (mm)", "QTY."], ["INSPECTION CHAMBER", "800*900", "1"], ["GULLY TRAP", "500*500", "1"], ["P TRAP", "---", "1"], ["FLOOR DRAIN", "200*200", "1"], ["GARDEN DRAIN", "200*200", "0"],
  ["FLOOR CLEAN OUT", "75", "0"], ["", "100", "0"], ["", "150", "0"], ["ROOF DRAIN", "---", "0"], ["SCUPPER DRAIN", "---", "0"], ["", "", ""],
];

function DrainageFixtures() {
  const c = "border border-[#00dede] py-0 font-normal";
  return (
    <table className="absolute left-[762px] top-[231px] h-[208px] w-[295px] table-fixed border-collapse font-['Roboto'] text-[8px] leading-[13px] text-white">
      <colgroup><col className="w-[125px]" /><col className="w-[83px]" /><col /></colgroup>
      <thead><tr className="h-[18px]"><th colSpan={3} className={`${c} whitespace-pre pl-5 text-center text-xs leading-4`}>DRAINAGE  SYSTEM  BOQ</th></tr></thead>
      <tbody>{BOQ2.map((r, i) => <tr key={i}><td className={`${c} pl-[17px]`}>{r[0] || "\u00a0"}</td><td className={`${c} pl-[21px]`}>{r[1]}</td><td className={`${c} pl-6`}>{r[2]}</td></tr>)}</tbody>
    </table>
  );
}

const WX = [1, 51, 101, 151, 201, 250, 300, 350, 400];
const WY = [0, 9, 16, 28, 35, 42, 49, 56, 64, 71, 82, 94, 101, 108, 115, 127, 139, 151, 158, 165, 172, 179, 186, 193, 200, 208, 215, 222, 229, 236, 243, 250, 257, 264, 271];
const col1 = [28, 35, 42, 49, 56, 63, 70, 94, 101, 107, 151, 158, 165, 179, 186, 192, 208, 215, 222, 229, 236, 242, 249];
const col2 = [28, 49, 56, 63, 71, 101, 108, 141, 151, 158, 165, 179, 186, 193, 200, 208, 221, 228, 235, 243, 250];
const BLOCKS = [
  [3, 19, 46, 5], [55, 16, 41, 5], [108, 16, 36, 5], [160, 16, 31, 5], [157, 21, 38, 6], [204, 16, 43, 5], [270, 18, 12, 5], [72, 141, 7, 5],
  [121, 35, 10, 5], [121, 42, 10, 5], [121, 94, 10, 5], [123, 215, 5, 4], [120, 127, 12, 5], [55, 127, 41, 5], [161, 63, 29, 5],
  [223, 28, 6, 5], [223, 35, 6, 5], [223, 42, 6, 5], [221, 49, 9, 5], [221, 56, 9, 5], [208, 71, 35, 4], [224, 84, 3, 6], [221, 94, 9, 5],
  [252, 71, 47, 4], [268, 84, 15, 6], [267, 94, 18, 5], [308, 71, 35, 4], [322, 84, 7, 6], [325, 94, 2, 5], [370, 72, 12, 6], [374, 84, 3, 6], [374, 94, 3, 5],
  [4, 85, 43, 5], [11, 129, 29, 6], [8, 172, 35, 5], [10, 200, 31, 5],
  ...[28, 35, 42, 49, 56].map((y) => [274, y, 3, 5]), ...col1.map((y) => [68, y, 15, 5]), ...col2.map((y) => [124, y, 3, 5]),
];

function WaterSupply() {
  return (
    <svg className="absolute left-[1256px] top-[203px]" width="402" height="273" fill="none" role="img" aria-label="Water supply system table">
      <g stroke="#04caca">{WY.map((y) => <path key={y} d={`M0 ${y + 0.5}H402`} />)}</g>
      <g stroke="#00dede">{WX.map((x, i) => <path key={x} d={`M${x + 0.5} ${i === 0 || i === 8 ? 0 : 9}V272`} strokeWidth={i === 0 || i === 8 ? 2 : 1.4} />)}</g>
      <path d="M0 79.500H151" stroke="#2b5f9e" />
      <g stroke="#8b8084" strokeDasharray="3 2">{[[2, 17, 11], [152, 17, 11], [152, 64, 7], [2, 83, 11], [2, 127, 12], [2, 172, 7], [2, 200, 8]].map(([x, y, h]) => <path key={`${x}-${y}`} d={`M${x + 4} ${y}h41l3 ${h / 2}l-3 ${h / 2}h-41l-3-${h / 2}zM${x} ${y}l6 ${h}M${x + 48} ${y}l-6 ${h}`} />)}</g>
      <g fill="#fff">{BLOCKS.map(([x, y, w, h], i) => <rect key={i} x={x} y={y} width={w} height={h} />)}</g>
      <text x="201" y="8" textAnchor="middle" fill="#fff" className="font-['Liberation_Sans'] text-[7px]">WATER SUPPLY SYSTEM BOQ.</text>
    </svg>
  );
}

const range = (n) => Array.from({ length: n }, (_, i) => i);

function Grid() {
  const line = (i, step, off) => Math.round(off + i * step) + 0.5;
  return (
    <svg className="absolute inset-0 h-full w-full" aria-hidden="true">
      {range(90).map((i) => <path key={`v${i}`} d={`M${line(i, 29.72, 16)} 0V2000`} stroke={i % 5 ? "#262d38" : "#2e3544"} />)}
      {range(60).map((i) => <path key={`h${i}`} d={`M0 ${line(i, 29.76, -17)}H4000`} stroke={i % 5 ? "#262d38" : "#2e3544"} />)}
    </svg>
  );
}

function ViewCube() {
  return (
    <div className="absolute right-[18px] top-[42px] flex w-[132px] flex-col items-center">
      <svg width="132" height="142" viewBox="0 0 132 142" className="font-['Liberation_Sans'] font-bold" aria-label="View cube">
        <circle cx="66" cy="71" r="55" fill="none" stroke="#fff" strokeOpacity="0.160" strokeWidth="13" />
        <rect x="40" y="45" width="53" height="53" fill="#c9cbcd" fillOpacity="0.840" stroke="#8b8e8e" />
        <rect x="50" y="55" width="32" height="32" fill="#9ea2ad" fillOpacity="0.700" />
        <g fill="#b4b6b7" textAnchor="middle" className="text-[22px]"><text x="66" y="22">N</text><text x="66" y="136">S</text><text x="10" y="79">W</text><text x="124" y="79">E</text></g>
        <text x="66" y="76" textAnchor="middle" fill="#4b4f5a" className="font-['Open_Sans'] text-xs">TOP</text>
      </svg>
      <button type="button" className="mt-[18px] flex h-[21px] w-[57px] items-center justify-center gap-1.5 rounded-md border border-[#8f919f] bg-[#9b9dac] font-['Liberation_Sans'] text-sm text-[#4c4f5b]">WCS<Ico w={10} h={7}><path d="M1 1h8L5 6z" fill="#b9bbc6" stroke="#777a88" /></Ico></button>
    </div>
  );
}

function NavBar() {
  const st = "#43484f";
  return (
    <div className="absolute right-[3px] top-[254px] flex h-[261px] w-10 flex-col items-center rounded-md border border-[#4a5055] bg-[#5c6164]">
      <button type="button" aria-label="Close navigation bar" className="mr-1 self-end pt-1"><Ico w={8} h={8}><circle cx="4" cy="4" r="3.500" stroke={st} /><path d="M2 2l4 4M6 2L2 6" stroke={st} /></Ico></button>
      <button type="button" aria-label="Navigation wheel" className="mt-2 flex flex-col items-center gap-2.5"><Ico w={30} h={30}><path d="M28 15a13 13 0 1 1-13-13h13z" stroke={st} strokeWidth="1.800" /><circle cx="15" cy="15" r="7" stroke={st} strokeWidth="2" /><path d="M6 24l4-4M24 24l-4-4" stroke={st} /></Ico><Caret /></button>
      <span className="mt-1.5 h-px w-8 bg-[#6c7174]" />
      <button type="button" aria-label="Pan" className="mt-1"><Ico w={30} h={30}><path d="M9 26C6 22 3 18 2 15c1-2 3-1 6 3L7 6c0-2 3-2 4 0l2 9V3c0-2 3-2 3 0l1 11 3-10c1-2 3-1 3 1l-2 11 4-6c2-1 3 0 2 2l-5 11-2 5H11z" fill="#6a7075" stroke={st} /></Ico></button>
      <button type="button" aria-label="Zoom" className="mt-1 flex flex-col items-center gap-2"><Ico w={30} h={30}><path d="M3 3l14 14M17 3L3 17" stroke={st} strokeWidth="1.500" /><path d="M1 1h6L1 7zM20 1v6l-6-6zM1 19v-6l6 6z" fill={st} stroke="none" /><circle cx="19" cy="18" r="5.500" stroke={st} strokeWidth="2" fill="#6a7075" /><path d="M23 22l6 6" stroke={st} strokeWidth="3" /></Ico><Caret /></button>
      <button type="button" aria-label="Orbit" className="mt-1.5 flex flex-col items-center gap-2"><Ico w={30} h={28}><ellipse cx="15" cy="16" rx="13" ry="4.500" stroke={st} strokeWidth="1.800" /><path d="M15 1l5 6h-3v20h-4V7h-3z" fill="#6a7075" stroke={st} /><path d="M4 20l6-4v8z" fill={st} stroke="none" /></Ico><Caret /></button>
      <span className="mt-1 h-px w-8 bg-[#6c7174]" />
      <button type="button" aria-label="Show motion" className="mt-1"><Ico w={30} h={30}><rect x="1" y="1" width="7" height="7" stroke={st} /><rect x="11" y="1" width="7" height="7" stroke={st} /><rect x="21" y="1" width="7" height="7" stroke={st} /><rect x="1" y="12" width="20" height="16" stroke={st} strokeWidth="1.500" /><path d="M7 15l9 5-9 5z" fill={st} stroke="none" /></Ico></button>
      <Ico w={8} h={8} className="mb-1 mr-1 mt-auto self-end"><circle cx="4" cy="4" r="3.500" stroke={st} /><path d="M2 4h4" stroke={st} /></Ico>
    </div>
  );
}

function Drawing() {
  return (
    <main className="relative min-h-0 flex-1 overflow-hidden bg-[#212830]">
      <Grid />
      <svg className="absolute inset-0 h-full w-full" fill="none" stroke="#c48fc2" aria-hidden="true">
        <path d="M90.500 0V689M1840.500 0V689M0 68.500H1840M0 688.500H1841" />
        <path d="M20 624l7.500 8 7.500-8M27.500 632v8M18.500 643V705.500H81M13.500 699.500h11v11h-11zM85.500 690l15 15M100.500 690l-15 15" stroke="#e4e4e4" />
      </svg>
      <Sheet x={156} y={186} w={486} h={341} bar={[381, 61]} lead={6} />
      <Sheet x={706} y={190} w={444} h={311} bar={[365, 81]} lead={8} />
      <Sheet x={1221} y={169} w={528} h={370} bar={[368, 84]} lead={7} />
      <DrainagePipes />
      <DrainageFixtures />
      <WaterSupply />
      <div className="absolute left-0.5 top-1.5 flex text-[#e3e3e3]"><button type="button">[−]</button><button type="button">[Top]</button><button type="button">[2D Wireframe]</button></div>
      <div className="absolute right-[11px] top-2.5 flex items-center gap-3 text-[#e6e6e6]">
        <button type="button" aria-label="Minimize drawing"><Ico w={14} h={16}><path d="M0 11.500h13" stroke="#e6e6e6" strokeWidth="4" /></Ico></button>
        <button type="button" aria-label="Restore drawing"><Ico w={14} h={16}><rect x="1.500" y="5" width="8" height="7" stroke="#e6e6e6" strokeWidth="2.500" /><path d="M4 2h9v8" stroke="#e6e6e6" strokeWidth="1.500" /></Ico></button>
        <button type="button" aria-label="Close drawing window"><Ico w={12} h={16}><path d="M1 3l10 10M11 3L1 13" stroke="#e6e6e6" strokeWidth="3" /></Ico></button>
      </div>
      <ViewCube />
      <NavBar />
      <form className="absolute bottom-0 left-1/2 flex h-[34px] w-[313px] -translate-x-1/2 items-stretch rounded-t bg-[#a5a6a7]" onSubmit={(e) => e.preventDefault()}>
        <div className="flex w-[72px] items-center pl-[5px]">
          <Ico w={7} h={22}><path d="M1 0v22M5.500 0v22" stroke="#444" strokeWidth="2" strokeDasharray="2 2" /></Ico>
          <button type="button" aria-label="Close command line" className="ml-[7px]"><Ico w={12} h={12}><path d="M1 1l10 10M11 1L1 11" stroke="#444" strokeWidth="2.500" /></Ico></button>
          <button type="button" aria-label="Customize" className="ml-[15px]"><Ico w={22} h={22}><path d="M2 16l10-8c-1-4 2-7 6-6l-3 3 1 3 3 1 2-3c1 4-2 7-6 6l-9 9c-3 1-5-2-4-5z" stroke="#666" /></Ico></button>
        </div>
        <div className="flex min-w-0 flex-1 items-center rounded border border-[#b3b4b5] bg-[#bdbec0] pl-1">
          <button type="button" aria-label="Recent commands" className="flex items-center gap-0.5"><Ico w={21} h={16}><rect x="1" y="1" width="19" height="14" fill="#b2b3b4" stroke="#555" /><path d="M1 2.500h19" strokeWidth="3" /><path d="M3 6l3 2.500L3 11M8 11.500h4" /></Ico><Caret big /></button>
          <input aria-label="Command" placeholder="Type a command" className="min-w-0 flex-1 bg-transparent pl-2 font-['DejaVu_Sans_Mono'] text-[15px] italic outline-none placeholder:text-[#5c5c5e]" />
          <svg width="10" height="5" viewBox="0 0 10 5" className="mr-1.5 shrink-0" aria-hidden="true"><path d="M5 0l5 5H0z" fill="#555" /></svg>
        </div>
      </form>
    </main>
  );
}

function LayoutTabs() {
  return (
    <div className="flex h-[42px] shrink-0 items-start border-t-[5px] border-[#f5f5f5] bg-[#d9d9d9] pl-[9px]">
      <button type="button" className="h-[30px] w-[86px] bg-[#f5f5f5] font-bold text-[#333] [clip-path:polygon(12px_0,100%_0,calc(100%-12px)_100%,0_100%)]">Model</button>
      <button type="button" className="h-[30px] w-[71px] text-center">Layout1</button>
      <div className="flex h-[30px] items-center gap-3"><Slash /><button type="button" aria-label="New layout"><Plus /></button><Slash /></div>
    </div>
  );
}

const cell = "flex h-[30px] items-center justify-center";
const on = "border border-[#5b87b5] bg-[#cce4fa]";
const Compass = ({ extra }) => <Ico w={22} h={24}><path d="M9 2l3 11 6 8-6-2-3-3-3 3-6 2 6-8z" fill="#4c4c4c" stroke="none" />{extra}</Ico>;
const Chip = ({ w, active, name, children }) => <button type="button" aria-label={name} className={`${cell} ${w} shrink-0 ${active ? on : ""}`}>{children}</button>;

function StatusBar() {
  const g = "flex shrink-0 bg-[#f5f5f5]";
  return (
    <footer className="flex h-6 shrink-0 items-start overflow-hidden bg-[#d9d9d9] pr-px">
      <div className="ml-px h-[30px] min-w-0 flex-1 bg-[#f5f5f5]" />
      <div className={`${g} ml-[5px]`}><button type="button" className={`${cell} w-[60px]`}>MODEL</button></div>
      <div className={`${g} ml-[3px]`}>
        <Chip w="w-7" active name="Grid"><Ico w={20} h={20}><path d="M5 0v20M10 0v20M15 0v20M0 5h20M0 10h20M0 15h20" stroke="#444" /></Ico></Chip>
        <Chip w="w-8" name="Snap"><Ico w={16} h={16}><path d="M0 2h16M0 8h16M0 14h16" strokeWidth="3" strokeDasharray="3 3" /></Ico></Chip>
        <Chip w="w-[19px]" name="Snap options"><Caret big /></Chip>
      </div>
      <div className={`${g} ml-[3px]`}>
        <Chip w="w-[31px]" name="Ortho"><Ico w={20} h={20}><path d="M2 0v20M2 13h6v7" /></Ico></Chip>
        <Chip w="w-7" active name="Polar"><Ico w={22} h={20}><circle cx="9" cy="11" r="7.500" /><path d="M20 11H9l7-7" /><path d="M12 7h5v4z" fill="#777" /></Ico></Chip>
        <Chip w="w-[22px]" name="Polar options"><Caret big /></Chip>
        <Chip w="w-7" name="Isodraft"><Ico w={18} h={20}><path d="M1 2l14 16" stroke="#d33" /><path d="M9 0v20" stroke="#3b6" /><rect x="7.500" y="8" width="3" height="4" fill="#fff" /></Ico></Chip>
        <Chip w="w-[21px]" name="Isodraft options"><Caret big /></Chip>
      </div>
      <div className={`${g} ml-0.5 gap-0.5`}>
        <Chip w="w-7" active name="Object snap tracking"><Ico w={22} h={20}><path d="M19 0L3 17h18" /><rect x="8" y="8" width="5" height="5" fill="#333" stroke="none" /></Ico></Chip>
        <Chip w="w-7" active name="Object snap"><Ico w={22} h={20}><rect x="1" y="1" width="5" height="5" /><path d="M6 2h13v18M3 6v14" /></Ico></Chip>
        <Chip w="w-[19px]" name="Object snap options"><Caret big /></Chip>
      </div>
      <div className={`${g} ml-1`}>
        <Chip w="w-7" active name="Annotation visibility"><Compass extra={<circle cx="17" cy="7" r="3.500" stroke="#888" />} /></Chip>
        <Chip w="w-[34px]" name="Auto scale"><Compass extra={<path d="M16 2l-3 6h3l-1 5 4-7h-3l2-4z" fill="#555" stroke="none" />} /></Chip>
        <Chip w="w-[25px]" name="Annotation scale"><Compass /></Chip>
        <button type="button" className={`${cell} w-11 gap-1.5`}>1:1<Caret big /></button>
      </div>
      <div className={`${g} ml-[3px]`}>
        <Chip w="w-[30px]" name="Workspace"><Ico w={20} h={20}><circle cx="10" cy="10" r="5" strokeWidth="4.500" /><path d="M10 0v4M10 16v4M0 10h4M16 10h4M3 3l3 3M14 14l3 3M17 3l-3 3M6 14l-3 3" strokeWidth="3.500" /></Ico></Chip>
        <Chip w="w-5" name="Workspace options"><Caret big /></Chip>
      </div>
      <div className={`${g} ml-px`}><Chip w="w-[30px]" name="Annotation monitor"><Ico w={20} h={20}><path d="M10 0v20M0 10h20" strokeWidth="2.200" /></Ico></Chip></div>
      <div className={`${g} ml-[3px]`}>
        <Chip w="w-[30px]" name="Units"><Ico w={10} h={20}><rect width="10" height="20" fill="#555" stroke="none" /><path d="M6 3h4M4 6h6M6 9h4M4 12h6M6 15h4" stroke="#ddd" /></Ico></Chip>
        <button type="button" className={`${cell} w-[91px] gap-5`}>Decimal<Caret big /></button>
      </div>
      <div className={`${g} ml-[3px]`}><Chip w="w-[30px]" name="Isolate"><Ico w={20} h={22}><rect x="1" y="1" width="7" height="7" /><circle cx="15" cy="9" r="4" /><path d="M8 13l5 9H3z" /></Ico></Chip></div>
      <div className={`${g} ml-[3px]`}><Chip w="w-[34px]" name="Graphics performance"><Ico w={24} h={24}><circle cx="13" cy="9" r="9" fill="#2f5f9f" stroke="none" /><path d="M0 0h9v14H0z" fill="#3f7cbc" stroke="none" /><path d="M6 0l1 5 4 1-4 1-1 5-1-5-4-1 4-1z" fill="#fff" stroke="none" /><path d="M0 15h12v8H0z" fill="#f0b92d" stroke="none" /><path d="M12 17l4 4 7-8" stroke="#45b055" strokeWidth="3.500" /></Ico></Chip></div>
      <div className={`${g} ml-[3px]`}>
        <Chip w="w-[30px]" name="Clean screen"><Ico w={20} h={16}><rect x="1" y="1" width="18" height="14" /><path d="M17 3v4l-4-4zM3 13V9l4 4z" fill="#444" stroke="none" /></Ico></Chip>
        <Chip w="w-[30px]" name="Customization"><Ico w={20} h={20}><path d="M0 2h20M0 10h20M0 18h20" strokeWidth="2.500" /></Ico></Chip>
      </div>
    </footer>
  );
}

export default function App() {
  return (
    <div className="flex h-screen min-h-[640px] flex-col overflow-hidden bg-[#f5f5f5] font-['Open_Sans',sans-serif] text-sm text-[#404040]">
      <TitleBar />
      <RibbonTabs />
      <Ribbon />
      <FileTabs />
      <Drawing />
      <LayoutTabs />
      <StatusBar />
    </div>
  );
}
